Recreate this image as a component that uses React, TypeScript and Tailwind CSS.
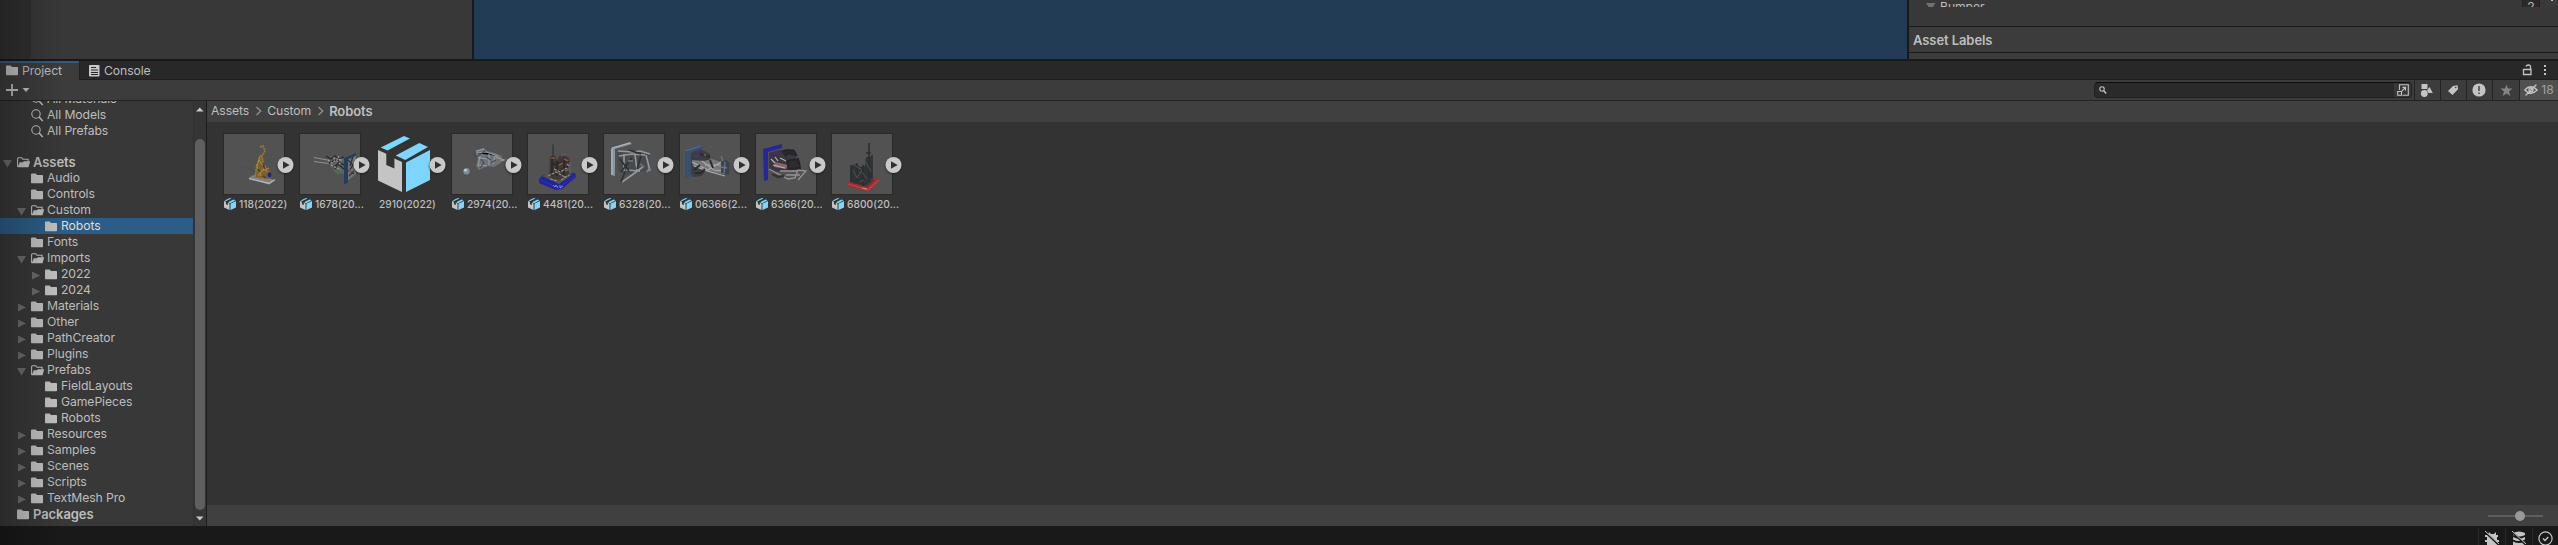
import React from "react";

const stroke = { fill: "none", strokeLinecap: "round", strokeLinejoin: "round" } as const;

function Folder({ open = false }: { open?: boolean }) {
  if (open)
    return (
      <svg width="14" height="12" viewBox="0 0 14 12" className="shrink-0">
        <path d="M.6 10V1.4L1.3.7h3.4l1.2 1.5h5.2v2" fill="none" stroke="#c2c2c2" strokeWidth="1.1" />
        <path d="M2.8 5.3h3l1-1.1h6.4L11.5 10.2H.6z" fill="#c2c2c2" />
      </svg>
    );
  return (
    <svg width="14" height="12" viewBox="0 0 14 12" className="shrink-0">
      <path d="M0 1.2Q0 .4.8.4h3.8L6 2h5.300q.7 0 .7.7v6.800q0 .7-.7.7H.7Q0 10.200 0 9.500z" fill="#c2c2c2" />
    </svg>
  );
}

function Magnifier() {
  return (
    <svg width="13" height="13" viewBox="0 0 13 13" className="shrink-0">
      <circle cx="5" cy="5" r="4.2" fill="none" stroke="#c2c2c2" strokeWidth="1.1" />
      <path d="M8.1 8.1l3.6 3.8" stroke="#c2c2c2" strokeWidth="1.5" />
    </svg>
  );
}

type Node = { name: string; depth: number; state?: "open" | "closed"; bold?: boolean; on?: boolean };

const tree: Node[] = [
  { name: "Assets", depth: 0, state: "open", bold: true },
  { name: "Audio", depth: 1 },
  { name: "Controls", depth: 1 },
  { name: "Custom", depth: 1, state: "open" },
  { name: "Robots", depth: 2, on: true },
  { name: "Fonts", depth: 1 },
  { name: "Imports", depth: 1, state: "open" },
  { name: "2022", depth: 2, state: "closed" },
  { name: "2024", depth: 2, state: "closed" },
  { name: "Materials", depth: 1, state: "closed" },
  { name: "Other", depth: 1, state: "closed" },
  { name: "PathCreator", depth: 1, state: "closed" },
  { name: "Plugins", depth: 1, state: "closed" },
  { name: "Prefabs", depth: 1, state: "open" },
  { name: "FieldLayouts", depth: 2 },
  { name: "GamePieces", depth: 2 },
  { name: "Robots", depth: 2 },
  { name: "Resources", depth: 1, state: "closed" },
  { name: "Samples", depth: 1, state: "closed" },
  { name: "Scenes", depth: 1, state: "closed" },
  { name: "Scripts", depth: 1, state: "closed" },
  { name: "TextMesh Pro", depth: 1, state: "closed" },
  { name: "Packages", depth: 0, bold: true },
];

const indent = ["pl-[3px]", "pl-[17px]", "pl-[31px]"];

function Row({ node }: { node: Node }) {
  return (
    <div className={`flex h-4 shrink-0 items-center ${indent[node.depth]} ${node.on ? "bg-[#2c5d87] text-[#dedede]" : ""}`}>
      <div className="flex h-full w-[14px] shrink-0 items-center pt-[2px]">
        {node.state && (
          <svg width="10" height="9" viewBox="0 0 10 9">
            <path d={node.state === "open" ? "M0 1h9L4.5 8.6z" : "M1 .5v8L9 4.5z"} fill="#6c6c6c" />
          </svg>
        )}
      </div>
      <div className="flex h-full w-[16px] shrink-0 items-center pt-[2px]">
        <Folder open={node.state === "open"} />
      </div>
      <span className={`whitespace-nowrap leading-4 ${node.bold ? "text-[13px] font-semibold" : ""}`}>{node.name}</span>
    </div>
  );
}

function Box({ className }: { className: string }) {
  return (
    <svg viewBox="0 0 52 56" preserveAspectRatio="none" className={`shrink-0 ${className}`}>
      <path d="M2.700 11.500L26 0l6 2.500-22.500 12zM17.700 19.500L41.300 7l8.700 4-22.700 13z" fill="#7fd6fd" />
      <path d="M0 14l8.300 3.800V29l8.100 3.500v-10L24 26v30L0 44.500z" fill="#c4c4c4" />
      <path d="M28 26.500L52 14v30L28 56z" fill="#7fd6fd" />
    </svg>
  );
}

const robots: Record<string, React.ReactNode> = {
  "118(2022)": (
    <>
      <path d="M25 43.500l8-4 18 7-6 4z" fill="#85807b" />
      <path d="M25 44.500l20 5 6-4" stroke="#a9b7c6" strokeWidth="1.300" fill="none" />
      <path d="M27 42l18 5" stroke="#a5675c" strokeDasharray="1.500 3" />
      <path d="M18 32.500l6 1.500 8 5M40 30l7-5" stroke="#46505a" strokeWidth="1.200" fill="none" />
      <path d="M31 43l2-14 3-9 3 1-1 10 7 4 3 7-3 3z" fill="#79602e" />
      <path d="M36 13l3-1 2 5-3 5 1 7M33 30l-2 13" stroke="#9b7d35" strokeWidth="1.600" strokeDasharray="2 .7" fill="none" />
      <path d="M36 22l-3 10 4 10M35 26l8 12M42 32l-8 10M37 37l8-3" stroke="#a98739" strokeWidth="1.100" fill="none" />
      <path d="M34 35l2 3M39 31l2 4M39 42l3 2" stroke="#433f34" strokeWidth="1.500" />
      <ellipse cx="45.500" cy="41" rx="2" ry="2.400" fill="#1b258e" />
    </>
  ),
  "1678(20...": (
    <>
      <path d="M14 23.500l16 3M14 27.500l15 2" stroke="#8c9298" strokeWidth="1.100" />
      <path d="M27 22l19 1v18l-7-2-5-4-6-6z" fill="#5e6161" />
      <path d="M26 22l5 3 4-3 4 3 5-2M29 29l7-3 8 5M32 34l6-4 7 6M40 25l-5 10" stroke="#2b302f" strokeWidth="1.500" fill="none" />
      <path d="M28 26l4 3 4-3 5 5M31 31l10 5M38 22l3 7M33 24l9 2" stroke="#a0a5a4" strokeWidth="1.100" strokeDasharray="2 1.500" fill="none" />
      <path d="M34 36l5 4" stroke="#397750" strokeWidth="1.800" />
      <path d="M31 33l3 1" stroke="#a63c42" strokeWidth="1.800" />
      <path d="M46 24l10-4v20l-10 8z" fill="#747477" />
      <path d="M48 26l5 5-4 6 5 3M53 22l-3 10M49 42l5-5" stroke="#30333b" strokeWidth="1.400" fill="none" />
      <path d="M49 35l2 4" stroke="#924f4c" strokeWidth="2" />
      <path d="M44 24l12-5v2.500l-8 4v23l-4 2z" fill="#243d5a" />
    </>
  ),
  "2974(20...": (
    <>
      <circle cx="14.500" cy="37.300" r="3.200" fill="#7e8c9b" />
      <circle cx="13.500" cy="36.300" r="1.300" fill="#cad2da" />
      <path d="M23 17l9-3 3 3 8 2 7 3-1 7-7 4-7-1-8 4-3-4 2-7z" fill="#6e7378" />
      <path d="M24 17l8-2M24 19l10-1 12 4M26 24l12 1M26 31l9 1M37 20v11M43 22l-2 8M28 22l-2 10" stroke="#979da4" strokeWidth="1.100" />
      <path d="M23 17v6l3-1 7-5M29 25l3 4-4 5M34 23l5 3M39 29l5-3" stroke="#454b51" strokeWidth="1.100" fill="none" />
      <path d="M44 23l8 3-3 1" stroke="#9ca0a5" strokeWidth="1.200" fill="none" />
    </>
  ),
  "4481(20...": (
    <>
      <path d="M11 45l4-4 32-2 1 4-14 12-6 1-17-7z" fill="#21249b" />
      <path d="M14 42l18-7 12 6-13 9z" fill="#55504c" />
      <path d="M25 10.500V23" stroke="#343535" strokeWidth="1.300" />
      <path d="M22 23l5-2 2 6 2-5 5-1 5 3 1 5-4 5 4 5-5 5-9 3-7-5z" fill="#3e3936" />
      <path d="M24 22v20M29 27v15M36 24v19M23 31l17-4M27 40l14-8" stroke="#292929" strokeWidth="1.700" />
      <path d="M23 24h4M36 25l4 2M31 31l4-2M37 37l3-1" stroke="#91503c" strokeWidth="1.700" />
      <path d="M26 35l6 3 7-4M20 42l8-4 9 5M39 30l3 3M33 46l8-5M22 45l8 2" stroke="#918e89" strokeWidth="1.200" strokeDasharray="3 1" fill="none" />
      <path d="M33 22l5-2M42 28v12" stroke="#5d6467" strokeWidth="1.200" />
      <path d="M12 46l16 7 5-1 14-10" stroke="#2e31bc" fill="none" />
      <path d="M25 51l2 2 1-2 2 3M32 51v3l3-2" stroke="#9aa0d8" strokeWidth=".8" fill="none" />
    </>
  ),
  "6328(20...": (
    <>
      <path d="M7 14l19-6 2 2-17 5v27l-4-1z" fill="#8a949d" />
      <path d="M8 15v26M8 14l18-5" stroke="#aeb8c2" strokeWidth="1.100" />
      <path d="M13 18l20-2 13 3-4 18-10 1-8 3-10-4z" fill="#474a4d" />
      <path d="M14 17l14 1 8-1 10 3M15 22l13-2 13 1M20 20v17M31 21l2 15M42 21l4 16M22 36l14 1M40 32l-12 9-10 7" stroke="#95999c" strokeWidth="1.600" fill="none" />
      <path d="M16 25l9 12M28 24L17 38M17 48l4-10M37 22l-4 13M25 16l12 4" stroke="#2c3033" strokeWidth="1.600" />
      <path d="M46 34l-3 4" stroke="#71869c" strokeWidth="1.800" />
      <path d="M24 27h5M36 30l4 3" stroke="#656b70" strokeWidth="2" />
    </>
  ),
  "06366(2...": (
    <>
      <path d="M5 17l16-5 3 2-13 5v24l-6 1z" fill="#394f70" />
      <path d="M5 17l16-5" stroke="#526d91" strokeWidth="1.200" />
      <path d="M11 19l9-4 10 5-1 11-7 11-9 1-2-3z" fill="#3d3c40" />
      <path d="M13 22h7M16 18l5-2" stroke="#45377c" strokeWidth="1.500" />
      <path d="M12 26l12 1 8-2 11 4v11l-13-2-17-6z" fill="#77777a" />
      <path d="M12 28l16 8 13-8M22 27l12 9 12 1M25 31h17M14 32l13 5 18 5" stroke="#aaaaab" strokeWidth="1.100" fill="none" />
      <path d="M15 39h6l4-4M20 31l-6 5M20 20l10 3M30 26l3 8" stroke="#292a2d" strokeWidth="2" fill="none" />
      <path d="M41 28l5-2 4 3-1 12-8-2z" fill="#3b444e" />
      <path d="M41 22l2 5M45 28l-1 12M41 33l6 1" stroke="#687687" strokeWidth="1.300" />
      <path d="M24 20l2 2" stroke="#6b5c2f" strokeWidth="2" />
    </>
  ),
  "6366(20...": (
    <>
      <path d="M7 15l19-5v4l-14 4v28l-4 1z" fill="#25279a" />
      <path d="M13 19l11-3 13-1 4 5-2 5 5 2 1 9-14 1-12 1-6-2z" fill="#39373b" />
      <path d="M15 20l9-2M15 36l5 1" stroke="#46296e" strokeWidth="2.500" />
      <path d="M19 28l13 3-2 4-12-2z" fill="#87636a" />
      <path d="M17 31l12 3M24 24l8 4M15 25l4 4M19 23l3 4" stroke="#b5b1b6" strokeWidth="1.200" />
      <path d="M13 35l19 10 7-1 3-8 8 1-8 9M24 37l18 0M30 41h14" stroke="#939397" strokeWidth="1.300" fill="none" />
      <path d="M26 18l5-2 7 1 2 4-8-2-3 3M31 27l11-2 2 9-11 1z" stroke="#252528" strokeWidth="2" fill="#2d2d2f" />
      <path d="M16 40l6 3 6-1" stroke="#343237" strokeWidth="2.500" fill="none" />
    </>
  ),
  "6800(20...": (
    <>
      <path d="M15 49l9-5 20-1 4 3-11 12-22-6z" fill="#9a3030" />
      <path d="M18 48l9-4 16 2-8 7z" fill="#493b3c" />
      <path d="M19 32l5-2 4 3 5-1 1-9h5l1 20-2 5-5 4-12-3-3-2z" fill="#303335" />
      <path d="M37 9v35M34 19h5M19 31v17M40 21v24M25 29v19M31 31v21" stroke="#2a2e30" strokeWidth="1.600" />
      <path d="M21 36l4 8 4-7 6 8M28 48l4-2M34 28l5 10M22 31l8 5" stroke="#505756" strokeWidth=".9" fill="none" />
      <path d="M16 50l20 6 11-10" stroke="#c24441" strokeWidth="1.200" fill="none" />
      <path d="M30 54l5 1" stroke="#d7a5a1" strokeWidth=".8" />
    </>
  ),
};

const assets = ["118(2022)", "1678(20...", "2910(2022)", "2974(20...", "4481(20...", "6328(20...", "06366(2...", "6366(20...", "6800(20..."];

function Asset({ name }: { name: string }) {
  const art = robots[name];
  return (
    <div className="w-[76px] shrink-0">
      <div className="relative h-[60px] w-[60px]">
        {art ? (
          <svg width="60" height="60" viewBox="0 0 60 60" className="bg-[#525252] shadow-[0_0_0_1px_#292929]">{art}</svg>
        ) : (
          <div className="pt-[2px] pl-[2px]"><Box className="h-[56px] w-[52px]" /></div>
        )}
        <svg width="18" height="18" viewBox="0 0 18 18" className="absolute top-[22px] left-[53px] overflow-visible drop-shadow-[0_1px_1px_#222]">
          <circle cx="8.500" cy="9" r="8" fill="#c9c9c9" />
          <path d="M6 5.300v7.400L12.700 9z" fill="#303030" />
        </svg>
      </div>
      <div className={`flex h-[18px] w-[72px] items-center pt-[2px] text-[10.200px] font-medium tracking-[0.050px] ${art ? "gap-[3px]" : "pl-[3px]"}`}>
        {art && <Box className="h-[12px] w-[12px]" />}
        <span className="whitespace-nowrap">{name}</span>
      </div>
    </div>
  );
}

function Tool({ children, className = "w-[26px] pr-[2px]" }: { children: React.ReactNode; className?: string }) {
  return <div className={`flex h-5 shrink-0 items-center justify-center border-l border-[#232323] ${className}`}>{children}</div>;
}

export default function App() {
  return (
    <div className="relative flex h-[545px] w-[2558px] flex-col overflow-hidden bg-[#191919] font-['Inter',sans-serif] text-[12.200px] leading-4 tracking-[-0.080px] text-[#bebebe]">
      <div className="flex h-[59px] shrink-0">
        <div className="w-[31px] bg-[#303030]" />
        <div className="w-[441px] bg-[#383838]" />
        <div className="w-[2px]" />
        <div className="w-[1433px] bg-[#223c55]" />
        <div className="w-[2px]" />
        <div className="flex flex-1 flex-col bg-[#383838]">
          <div className="flex h-[26px] shrink-0">
            <div className="flex h-[7px] flex-1 items-end overflow-hidden pl-[17px]">
              <svg width="14" height="7" viewBox="0 0 14 7" className="shrink-0"><path d="M0 3h9.500L7 7H2.500z" fill="#707070" /></svg>
              <span className="h-[7px] leading-[14px]">Bumper</span>
            </div>
            <div className="h-[7px] w-[18px] overflow-hidden border-x border-[#222] bg-[#2a2a2a] text-center leading-[13px]">2</div>
            <div className="ml-[6px] flex h-[7px] w-[12px] justify-center bg-[#3b3b3b]"><div className="h-[1px] w-[2px] bg-[#c4c4c4]" /></div>
          </div>
          <div className="flex h-[27px] shrink-0 items-center border-y border-[#191919] bg-[#3c3c3c] pl-[4px] text-[13px] font-semibold">Asset Labels</div>
          <div className="flex-1 bg-[#3c3c3c]" />
        </div>
      </div>
      <div className="h-[2px] shrink-0" />

      <div className="flex h-[19px] shrink-0 bg-[#282828]">
        <div className="flex w-[79px] items-center border-t-2 border-[#2c5d87] bg-[#3c3c3c] pb-[1px] pl-[6px]">
          <Folder /><span className="pl-[2px]">Project</span>
        </div>
        <div className="flex flex-1 items-center border-b border-l border-[#202020] pt-[1px] pl-[9px]">
          <svg width="11" height="12" viewBox="0 0 11 12"><rect width="10.500" height="11.500" rx=".8" fill="#c8c8c8" /><path d="M2 2.500h5M2 5h7M2 7.500h7M2 9.500h7" stroke="#292929" /></svg>
          <span className="pl-[4px]">Console</span>
        </div>
        <div className="flex w-[36px] items-center gap-[10px] border-b border-[#202020]">
          <svg width="11" height="12" viewBox="0 0 11 12"><path d="M1.500 5.500h7.500v5H1.500zM8.500 5V3Q8.500 1 6.500 1T4 2.500" fill="none" stroke="#c4c4c4" strokeWidth="1.300" /></svg>
          <svg width="4" height="12" viewBox="0 0 4 12"><path d="M1 1h2v2H1zM1 5h2v2H1zM1 9h2v2H1z" fill="#c4c4c4" /></svg>
        </div>
      </div>

      <div className="flex h-[21px] shrink-0 border-b border-[#232323] bg-[#3c3c3c]">
        <svg width="32" height="20" viewBox="0 0 32 20"><path d="M12 4v12M6 10h12" stroke="#c4c4c4" strokeWidth="1.800" /><path d="M22.500 8h7L26 12z" fill="#c4c4c4" /></svg>
        <div className="flex-1" />
        <div className="mt-[2px] mr-[2px] flex h-4 w-[318px] items-center justify-between rounded-[4px] border border-t-[#0d0d0d] border-[#212121] bg-[#2a2a2a] pl-[4px]">
          <svg width="8" height="8" viewBox="0 0 8 8"><circle cx="3" cy="3" r="2.200" fill="none" stroke="#c4c4c4" strokeWidth="1.100" /><path d="M4.700 4.700l2.500 2.700" stroke="#c4c4c4" strokeWidth="1.400" /></svg>
          <div className="flex h-full w-[17px] items-center justify-center rounded-r-[3px] bg-[#383838]">
            <svg width="12" height="12" viewBox="0 0 12 12"><path d="M2.500 6V.7h8.800v10.600H5.500M.7 7.500h3.800v3.800H.7zM4.800 7.200L8.500 3.500M5.500 3.400h3v3" fill="none" stroke="#c4c4c4" strokeWidth="1.100" /></svg>
          </div>
        </div>
        <Tool><svg width="13" height="13" viewBox="0 0 13 13" fill="#c4c4c4"><path d="M1.500 0h6v5h-6z" /><circle cx="4.300" cy="9.500" r="3.400" /><path d="M9.500 3l3.300 6H8.500L7 6.500z" /></svg></Tool>
        <Tool><svg width="12" height="12" viewBox="0 0 12 12"><path d="M1 7l5-5 4.500-.7.500 4L5.500 11z" fill="#c4c4c4" /><circle cx="8.700" cy="3.500" r=".8" fill="#3c3c3c" /></svg></Tool>
        <Tool><svg width="14" height="14" viewBox="0 0 14 14"><circle cx="7" cy="7" r="6.600" fill="#c4c4c4" /><path d="M7 3v5M7 9.500v1.600" stroke="#3c3c3c" strokeWidth="1.400" /></svg></Tool>
        <Tool className="w-[27px]"><svg width="13" height="13" viewBox="0 0 13 13"><path d="M6.500.5l1.500 4h4.500L9 7.500l1.400 4.600-3.900-2.700-3.900 2.700L4 7.500.5 4.500H5z" fill="#858585" /></svg></Tool>
        <Tool className="w-[39px] gap-[3px] bg-[#505050]">
          <svg width="14" height="12" viewBox="0 0 14 12" stroke="#c4c4c4" strokeWidth="1.300" {...stroke}><path d="M.8 6Q6.800-.5 13.200 6 6.800 12.500.8 6zM2 11L12 1" /><circle cx="7" cy="6" r="2" /></svg>
          <span className="text-[#a0a0a0]">18</span>
        </Tool>
      </div>

      <div className="flex h-[425px] shrink-0">
        <div className="flex w-[193px] flex-col overflow-hidden bg-[#383838]">
          <div className="-mt-[10px] flex h-[63px] shrink-0 flex-col pl-[31px]">
            {["All Materials", "All Models", "All Prefabs"].map((t) => (
              <div key={t} className="flex h-4 items-center gap-[3px] whitespace-nowrap"><Magnifier />{t}</div>
            ))}
          </div>
          {tree.map((n, i) => <Row key={i} node={n} />)}
        </div>
        <div className="flex w-[13px] flex-col items-center border-l border-[#303030] bg-[#353535] pt-[6px]">
          <svg width="8" height="5" viewBox="0 0 8 5"><path d="M0 4.500h7.500L3.800.5z" fill="#c8c8c8" /></svg>
          <div className="mt-[27px] h-[371px] w-[10px] rounded-full bg-[#5f5f5f]" />
          <svg width="8" height="5" viewBox="0 0 8 5" className="mt-[6px]"><path d="M0 .5h7.500L3.800 4.500z" fill="#c8c8c8" /></svg>
        </div>
        <div className="w-[1px] bg-[#1c1c1c]" />
        <div className="flex flex-1 flex-col bg-[#333]">
          <div className="flex h-[21px] items-center bg-[#404040] pb-[1px] pl-[4px]">
            <span>Assets</span>
            <svg width="18" height="10" viewBox="0 0 18 10"><path d="M7.500 1l4.200 4-4.200 4" fill="none" stroke="#8e8e8e" strokeWidth="1.400" /></svg>
            <span>Custom</span>
            <svg width="18" height="10" viewBox="0 0 18 10"><path d="M7.500 1l4.200 4-4.200 4" fill="none" stroke="#8e8e8e" strokeWidth="1.400" /></svg>
            <span className="text-[13px] font-semibold">Robots</span>
          </div>
          <div className="flex flex-1 pt-[12px] pl-[17px]">{assets.map((a) => <Asset key={a} name={a} />)}</div>
          <div className="flex h-[21px] items-center justify-end bg-[#404040] pr-[15px]">
            <svg width="55" height="12" viewBox="0 0 55 12"><path d="M0 6h55" stroke="#5e5e5e" strokeWidth="2" /><circle cx="32" cy="6" r="5" fill="#999" /></svg>
          </div>
        </div>
      </div>

      <div className="flex flex-1 justify-end overflow-hidden pt-[2px]">
        <div className="flex w-[27px] justify-center border-l border-[#292929] pt-[3px]">
          <svg width="14" height="14" viewBox="0 0 14 14"><path d="M4 1l2 2h3l2-2v3h2v2h-1v3h2v2h-2l1 3H2v-3H0V9h2V6H0V4h3z" fill="#c4c4c4" /><path d="M0 1l14 13" stroke="#191919" strokeWidth="2" /><path d="M0 0l14 13" stroke="#c4c4c4" /></svg>
        </div>
        <div className="flex w-[27px] justify-center border-l border-[#292929] pt-[3px]">
          <svg width="14" height="14" viewBox="0 0 14 14"><path d="M1 2Q7-1 13 2v2q-6 3-12 0zM1 6q6 3 12 0v2.500q-6 3-12 0zM1 10.500q6 3 12 0V14H1z" fill="#c4c4c4" /><path d="M0 1l14 13" stroke="#191919" strokeWidth="2" /><path d="M0 0l14 13" stroke="#c4c4c4" /></svg>
        </div>
        <div className="flex w-[26px] justify-center border-l border-[#292929] pt-[3px]">
          <svg width="15" height="15" viewBox="0 0 15 15"><circle cx="7.500" cy="7.500" r="6.600" fill="none" stroke="#c4c4c4" strokeWidth="1.200" /><path d="M5 7.500L7 9.500 10.300 6" fill="none" stroke="#c4c4c4" strokeWidth="1.400" /></svg>
        </div>
      </div>
      <div className="pointer-events-none absolute inset-y-0 left-0 w-[64px] bg-gradient-to-r from-black/25 to-transparent" />
    </div>
  );
}
